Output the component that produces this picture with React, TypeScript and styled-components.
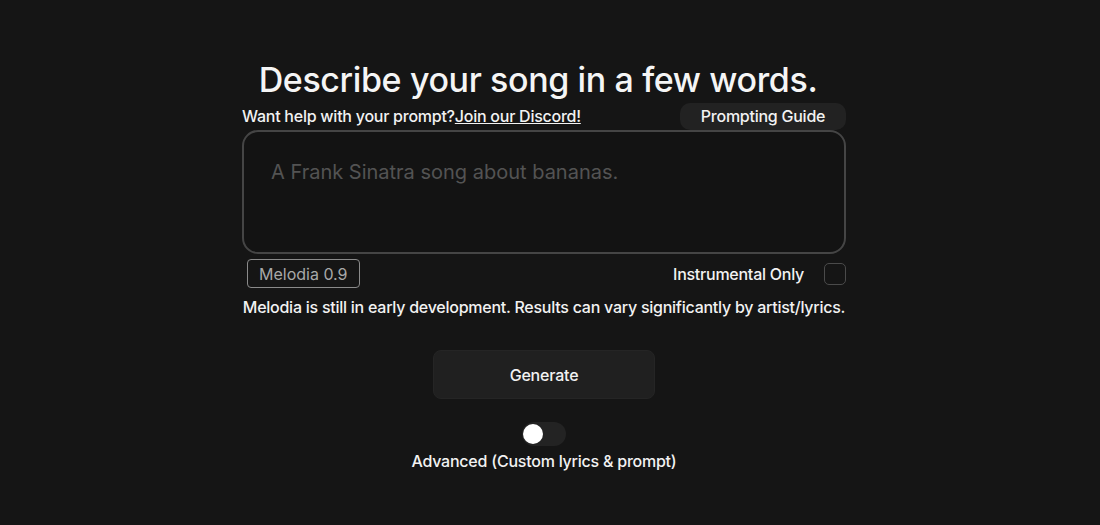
import React from "react";
import styled, { createGlobalStyle } from "styled-components";

const Global = createGlobalStyle`
  html, body { margin: 0; padding: 0; background: #151515; }
  body { font-family: Inter, "Noto Sans", sans-serif; color: #f2f2f2; }
`;

const Page = styled.div`
  box-sizing: border-box;
  width: 1100px;
  height: 525px;
  padding-right: 12px;
  display: flex;
  justify-content: center;
  background: #151515;
`;

const Column = styled.div`
  width: 604px;
  display: flex;
  flex-direction: column;
  align-items: stretch;
  padding-top: 58px;
`;

const Title = styled.h1`
  margin: 0 12px 0 0;
  font-size: 34px;
  font-weight: 500;
  line-height: 44px;
  letter-spacing: -0.38px;
  text-align: center;
  color: #f5f5f5;
`;

const HelpRow = styled.div`
  display: flex;
  justify-content: space-between;
  align-items: center;
  height: 28px;
`;

const HelpText = styled.span`
  font-size: 16px;
  font-weight: 500;
  letter-spacing: -0.25px;
  color: #f2f2f2;
`;

const Link = styled.a`
  color: #f2f2f2;
  text-decoration: underline;
  cursor: pointer;
`;

const GuideButton = styled.button`
  width: 166px;
  height: 27px;
  border: none;
  border-radius: 10px;
  background: #222222;
  color: #f2f2f2;
  font-family: inherit;
  font-size: 16px;
  font-weight: 500;
  letter-spacing: -0.25px;
`;

const Prompt = styled.textarea`
  box-sizing: border-box;
  height: 124px;
  border: 2px solid #454545;
  border-radius: 16px;
  background: #131313;
  padding: 28px 27px;
  resize: none;
  font-family: inherit;
  font-size: 20px;
  color: #ddd;
  outline: none;
  &::placeholder { color: #535353; }
`;

const OptionsRow = styled.div`
  display: flex;
  justify-content: space-between;
  align-items: center;
  margin-top: 5px;
  padding-left: 5px;
`;

const Badge = styled.div`
  box-sizing: border-box;
  height: 29px;
  padding: 0 11px;
  display: flex;
  align-items: center;
  border: 1px solid #8a8a8a;
  border-radius: 4px;
  font-size: 16px;
  color: #a8a8a8;
`;

const CheckLabel = styled.label`
  display: flex;
  align-items: center;
  gap: 20px;
  font-size: 16px;
  font-weight: 500;
  letter-spacing: -0.25px;
  color: #f2f2f2;
`;

const CheckBox = styled.span`
  box-sizing: border-box;
  width: 22px;
  height: 22px;
  border: 1.5px solid #4a4a4a;
  border-radius: 5px;
`;

const Notice = styled.p`
  margin: 9px 0 0;
  font-size: 16px;
  font-weight: 500;
  letter-spacing: -0.25px;
  text-align: center;
  color: #f2f2f2;
  white-space: nowrap;
`;

const Center = styled.div`
  display: flex;
  flex-direction: column;
  align-items: center;
`;

const GenerateButton = styled.button`
  box-sizing: border-box;
  margin-top: 33px;
  width: 222px;
  height: 49px;
  border: 1px solid #252525;
  border-radius: 8px;
  background: #202020;
  color: #f2f2f2;
  font-family: inherit;
  font-size: 16px;
  font-weight: 500;
  letter-spacing: -0.2px;
`;

const Toggle = styled.div`
  margin-top: 23px;
  width: 44px;
  height: 24px;
  border-radius: 12px;
  background: #232323;
  display: flex;
  align-items: center;
  padding: 0 1px;
  box-sizing: border-box;
`;

const Knob = styled.span`
  width: 20px;
  height: 20px;
  border-radius: 50%;
  background: #ffffff;
`;

const ToggleLabel = styled.div`
  margin-top: 5px;
  font-size: 16px;
  font-weight: 500;
  letter-spacing: -0.23px;
  color: #f2f2f2;
`;

export default function App() {
  return (
    <Page>
      <Global />
      <Column>
        <Title>Describe your song in a few words.</Title>
        <HelpRow>
          <HelpText>
            Want help with your prompt?<Link>Join our Discord!</Link>
          </HelpText>
          <GuideButton>Prompting Guide</GuideButton>
        </HelpRow>
        <Prompt placeholder="A Frank Sinatra song about bananas." />
        <OptionsRow>
          <Badge>Melodia 0.9</Badge>
          <CheckLabel>
            Instrumental Only
            <CheckBox />
          </CheckLabel>
        </OptionsRow>
        <Notice>
          Melodia is still in early development. Results can vary significantly by artist/lyrics.
        </Notice>
        <Center>
          <GenerateButton>Generate</GenerateButton>
          <Toggle>
            <Knob />
          </Toggle>
          <ToggleLabel>Advanced (Custom lyrics &amp; prompt)</ToggleLabel>
        </Center>
      </Column>
    </Page>
  );
}
